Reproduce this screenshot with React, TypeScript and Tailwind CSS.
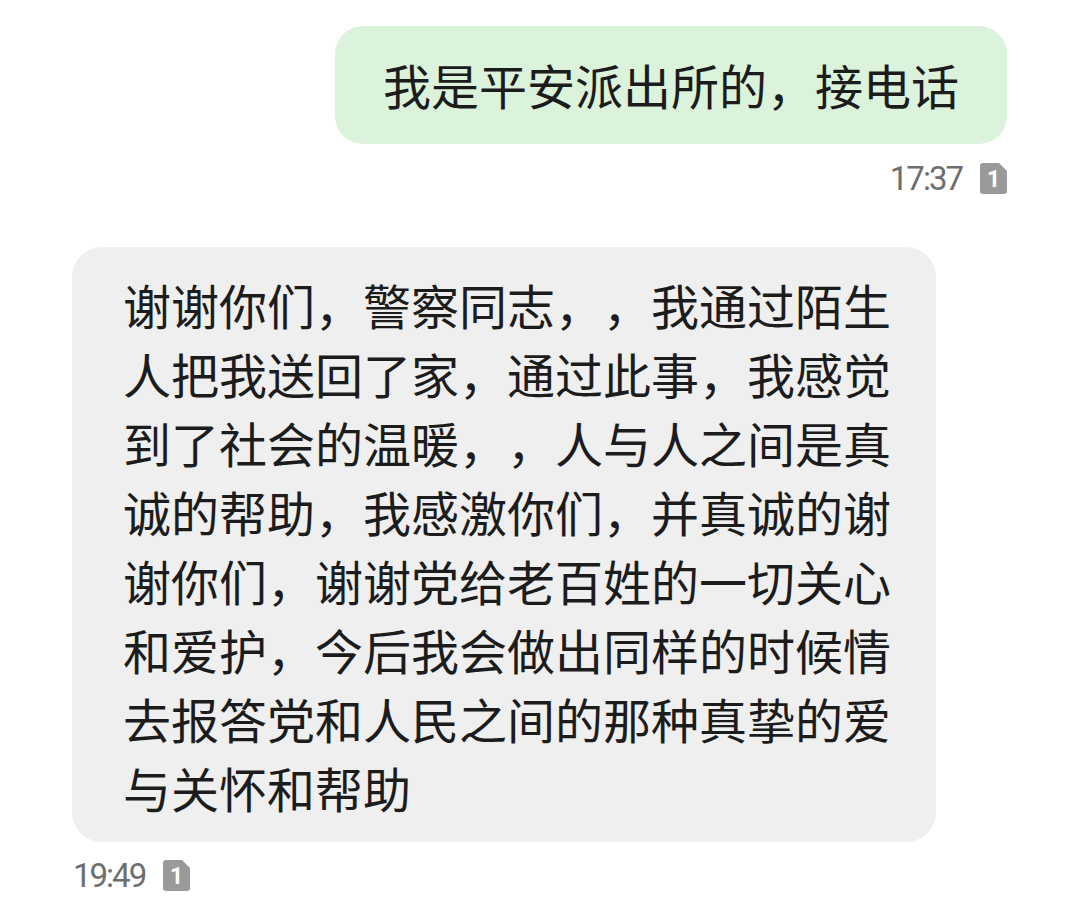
import React from "react";

const FONT_CJK = "font-['Noto_Sans_CJK_SC','Noto_Sans',sans-serif]";

const replyLines = [
  "谢谢你们，警察同志，，我通过陌生",
  "人把我送回了家，通过此事，我感觉",
  "到了社会的温暖，，人与人之间是真",
  "诚的帮助，我感激你们，并真诚的谢",
  "谢你们，谢谢党给老百姓的一切关心",
  "和爱护，今后我会做出同样的时候情",
  "去报答党和人民之间的那种真挚的爱",
  "与关怀和帮助",
];

function SimBadge() {
  return (
    <div className="relative w-[27px] h-[31px] shrink-0">
      <svg width="27" height="31" viewBox="0 0 27 31" className="absolute inset-0">
        <path
          d="M3 0 H19 L27 8 V28 Q27 31 24 31 H3 Q0 31 0 28 V3 Q0 0 3 0 Z"
          fill="#9a9a9a"
        />
      </svg>
      <span className="absolute inset-0 flex items-center justify-center pt-[1px] text-white text-[23px] font-bold leading-none font-['Roboto',sans-serif]">
        1
      </span>
    </div>
  );
}

function Stamp({ time }: { time: string }) {
  return (
    <div className="flex items-center gap-[18px]">
      <span className="text-[33px] leading-none tracking-[-2px] text-[#6e6e6e] font-['Roboto',sans-serif]">
        {time}
      </span>
      <SimBadge />
    </div>
  );
}

export default function App() {
  return (
    <div
      className={`w-[1080px] h-[906px] bg-white overflow-hidden px-[72px] pt-[26px] [text-spacing-trim:space-all] ${FONT_CJK}`}
    >
      <div className="flex flex-col items-end pr-[1px]">
        <div className="rounded-[28px] bg-[#daf3da] px-[48px] pt-[24px] pb-[25px] text-[48px] leading-[69px] text-[#1c1c1c] whitespace-nowrap">
          我是平安派出所的，接电话
        </div>
        <div className="mt-[18px]">
          <Stamp time="17:37" />
        </div>
      </div>

      <div className="mt-[52px] flex flex-col items-start">
        <div className="w-[864px] rounded-[30px] bg-[#efefef] pl-[51px] pt-[23px] pb-[20px] text-[48px] leading-[69px] text-[#1c1c1c]">
          {replyLines.map((line, i) => (
            <div key={i} className="whitespace-nowrap">
              {line}
            </div>
          ))}
        </div>
        <div className="mt-[17px] pl-[1px]">
          <Stamp time="19:49" />
        </div>
      </div>
    </div>
  );
}
